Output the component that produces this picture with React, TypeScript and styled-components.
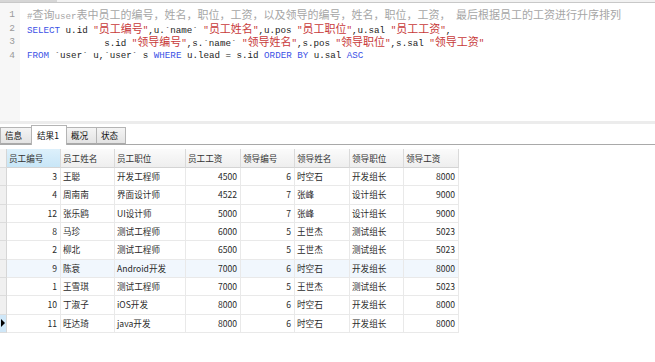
import React from 'react';
import styled, {createGlobalStyle} from 'styled-components';

const GlobalStyle = createGlobalStyle`
  html, body {
    margin: 0;
    padding: 0;
    background: #ffffff;
    font-family: "Noto Sans CJK SC", "Noto Sans", sans-serif;
  }
`

// split a line into ascii / cjk runs so cjk glyphs get their own size
const isCjk = (ch: string) => /[\u3000-\u9fff\uff00-\uffef]/.test(ch);

const mix = (text: string) => {
    const parts: React.ReactNode[] = [];
    let buf = '';
    let cjk = false;
    const flush = () => {
        if (!buf) return;
        parts.push(cjk ? <Cjk key={parts.length}>{buf}</Cjk> : buf);
        buf = '';
    };
    for (const ch of text) {
        const c = isCjk(ch);
        if (c !== cjk) {
            flush();
            cjk = c;
        }
        buf += ch;
    }
    flush();
    return parts;
};

type Tok = { t: string; k?: 'kw' | 'str' | 'cm' };

const code: Tok[][] = [
    [{t: '#查询user表中员工的编号，姓名，职位，工资，以及领导的编号，姓名，职位，工资， 最后根据员工的工资进行升序排列', k: 'cm'}],
    [
        {t: 'SELECT', k: 'kw'}, {t: ' u.id '}, {t: '"员工编号"', k: 'str'}, {t: ',u.`name` '},
        {t: '"员工姓名"', k: 'str'}, {t: ',u.pos '}, {t: '"员工职位"', k: 'str'}, {t: ',u.sal '},
        {t: '"员工工资"', k: 'str'}, {t: ','},
    ],
    [
        {t: '              s.id '}, {t: '"领导编号"', k: 'str'}, {t: ',s.`name` '}, {t: '"领导姓名"', k: 'str'},
        {t: ',s.pos '}, {t: '"领导职位"', k: 'str'}, {t: ',s.sal '}, {t: '"领导工资"', k: 'str'},
    ],
    [
        {t: 'FROM', k: 'kw'}, {t: ' `user` u,`user` s '}, {t: 'WHERE', k: 'kw'}, {t: ' u.lead = s.id '},
        {t: 'ORDER BY', k: 'kw'}, {t: ' u.sal '}, {t: 'ASC', k: 'kw'},
    ],
];

const columns = ['员工编号', '员工姓名', '员工职位', '员工工资', '领导编号', '领导姓名', '领导职位', '领导工资'];
const colWidths = '7px 54px 54px 71px 55px 54px 55px 54px 55px';
const numeric = [true, false, false, true, true, false, false, true];

const rows: (string | number)[][] = [
    [3, '王聪', '开发工程师', 4500, 6, '时空石', '开发组长', 8000],
    [4, '周南南', '界面设计师', 4522, 7, '张峰', '设计组长', 9000],
    [12, '张乐鸥', 'UI设计师', 5000, 7, '张峰', '设计组长', 9000],
    [8, '马珍', '测试工程师', 6000, 5, '王世杰', '测试组长', 5023],
    [2, '柳北', '测试工程师', 6500, 5, '王世杰', '测试组长', 5023],
    [9, '陈衰', 'Android开发', 7000, 6, '时空石', '开发组长', 8000],
    [1, '王雪琪', '测试工程师', 7000, 5, '王世杰', '测试组长', 5023],
    [10, '丁淑子', 'iOS开发', 8000, 6, '时空石', '开发组长', 8000],
    [11, '旺达琦', 'java开发', 8000, 6, '时空石', '开发组长', 8000],
];

const tabs = [
    {label: '信息', w: 32},
    {label: '结果1', w: 36, active: true},
    {label: '概况', w: 31},
    {label: '状态', w: 30},
];

export default function App() {
    return (
        <Page>
            <GlobalStyle/>
            <TopStrip>
                <TopLeft/>
            </TopStrip>
            <Editor>
                <Gutter>
                    {code.map((_, i) => <LineNo key={i}>{i + 1}</LineNo>)}
                </Gutter>
                <CodeArea>
                    {code.map((line, i) => (
                        <CodeLine key={i}>
                            {line.map((tok, j) => <Token key={j} $kind={tok.k}>{mix(tok.t)}</Token>)}
                        </CodeLine>
                    ))}
                </CodeArea>
            </Editor>
            <Splitter/>
            <TabBar>
                {tabs.map(tab => (
                    <Tab key={tab.label} $active={tab.active} $w={tab.w}>{tab.label}</Tab>
                ))}
            </TabBar>
            <Grid>
                <HeaderRow>
                    <Indicator $head/>
                    {columns.map((c, i) => <HeadCell key={c} $selected={i === 0}>{c}</HeadCell>)}
                </HeaderRow>
                {rows.map((r, i) => (
                    <DataRow key={i} $hover={i === 5}>
                        <Indicator $current={i === rows.length - 1}>
                            {i === rows.length - 1 && <Arrow/>}
                        </Indicator>
                        {r.map((v, j) => <Cell key={j} $num={numeric[j]}>{v}</Cell>)}
                    </DataRow>
                ))}
            </Grid>
        </Page>
    );
}

const Page = styled.div`
  width: 655px;
  height: 362px;
  overflow: hidden;
  background: #ffffff;
`

const TopStrip = styled.div`
  height: 3px;
  border-bottom: 1px solid #c8c8c8;
  box-sizing: border-box;
  background: #f2f2f2;
`

const TopLeft = styled.div`
  width: 57px;
  height: 2px;
  background: #d6d6d6;
`

const Editor = styled.div`
  display: flex;
  height: 118px;
`

const Gutter = styled.div`
  width: 20px;
  background: #f7f7f7;
  padding-top: 5px;
  box-sizing: border-box;
`

const LineNo = styled.div`
  height: 13.5px;
  line-height: 13.5px;
  text-align: right;
  padding-right: 5px;
  font-family: "Liberation Mono", monospace;
  font-size: 9.5px;
  color: #9a9a9a;
`

const CodeArea = styled.div`
  flex: 1;
  padding: 5px 0 0 7px;
`

const CodeLine = styled.div`
  height: 13.5px;
  line-height: 13.5px;
  white-space: pre;
  font-family: "Liberation Mono", monospace;
  font-size: 9.2px;
  color: #222222;
`

const Token = styled.span<{ $kind?: 'kw' | 'str' | 'cm' }>`
  color: ${p => p.$kind === 'kw' ? '#3b52e6' : p.$kind === 'str' ? '#c83a3a' : p.$kind === 'cm' ? '#a6a6a6' : '#222222'};
`

const Cjk = styled.span`
  display: inline-block;
  height: 13.5px;
  line-height: 13.5px;
  font-family: "Noto Sans CJK SC", sans-serif;
  font-size: 11px;
`

const Splitter = styled.div`
  height: 3px;
  background: #ececec;
`

const TabBar = styled.div`
  display: flex;
  align-items: flex-end;
  height: 21px;
  box-sizing: border-box;
  border-bottom: 1px solid #a9a9a9;
`

const Tab = styled.div<{ $active?: boolean; $w: number }>`
  width: ${p => p.$w}px;
  height: ${p => p.$active ? 20 : 17}px;
  box-sizing: border-box;
  padding-left: ${p => p.$active ? 5 : 4}px;
  padding-top: ${p => p.$active ? 3 : 1}px;
  margin-bottom: ${p => p.$active ? -1 : 0}px;
  border: 1px solid #b4b4b4;
  border-bottom: ${p => p.$active ? 'none' : '1px solid #a9a9a9'};
  background: ${p => p.$active ? '#ffffff' : 'linear-gradient(#f4f4f4, #e3e3e3)'};
  font-size: 8.6px;
  line-height: 13px;
  color: #111111;
  & + & {
    margin-left: -1px;
  }
`

const Grid = styled.div`
  margin-top: 4px;
  width: 459px;
`

const HeaderRow = styled.div`
  display: grid;
  grid-template-columns: ${colWidths};
  height: 19px;
`

const DataRow = styled.div<{ $hover?: boolean }>`
  display: grid;
  grid-template-columns: ${colWidths};
  height: 18.33px;
  background: ${p => p.$hover ? '#f1f7fd' : '#ffffff'};
`

const Indicator = styled.div<{ $head?: boolean; $current?: boolean }>`
  display: flex;
  align-items: center;
  justify-content: center;
  box-sizing: border-box;
  border-bottom: 1px solid #dcdcdc;
  border-right: 1px solid #d6d6d6;
  background: ${p => p.$current ? '#cfe7f8' : p.$head ? '#f4f4f4' : '#f0f0f0'};
`

const Arrow = styled.div`
  width: 0;
  height: 0;
  border-top: 4px solid transparent;
  border-bottom: 4px solid transparent;
  border-left: 4px solid #000000;
`

const HeadCell = styled.div<{ $selected?: boolean }>`
  box-sizing: border-box;
  padding-left: 2px;
  border-right: 1px solid #dadada;
  border-bottom: 1px solid #d4d4d4;
  background: ${p => p.$selected ? 'linear-gradient(#ddf0fb, #c8e6f7)' : 'linear-gradient(#fbfbfb, #eeeeee)'};
  font-size: 8.6px;
  line-height: 18px;
  color: #333333;
  white-space: nowrap;
  overflow: hidden;
`

const Cell = styled.div<{ $num?: boolean }>`
  box-sizing: border-box;
  padding: 0 3px 0 2px;
  border-right: 1px solid #e9e9e9;
  border-bottom: 1px solid #e9e9e9;
  text-align: ${p => p.$num ? 'right' : 'left'};
  font-size: 8.6px;
  line-height: 17px;
  color: #2a2a2a;
  white-space: nowrap;
  overflow: hidden;
`
